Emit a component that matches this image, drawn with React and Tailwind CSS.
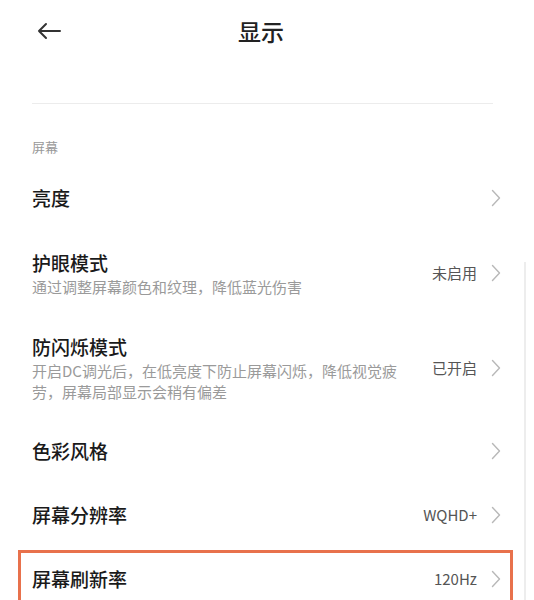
import React from 'react';

const Chevron = () => (
    <svg width="10" height="18" viewBox="0 0 10 18" fill="none" className="shrink-0">
        <path d="M1.5 1.5 L8.5 9 L1.5 16.5" stroke="#b8b8b8" strokeWidth="1.4" strokeLinecap="round" strokeLinejoin="round" />
    </svg>
);

const Row = ({ title, sub, value, height }) => (
    <div className={`flex items-center justify-between pl-[32px] pr-[33px] ${height}`}>
        <div className="flex flex-col">
            <div className="text-[19px] leading-[26px] font-medium text-[#1a1a1a]">{title}</div>
            {sub && (
                <div className="text-[15px] leading-[21px] text-[#9a9a9a] max-w-[382px]">{sub}</div>
            )}
        </div>
        <div className="flex items-center gap-[14px] shrink-0">
            {value && <span className="text-[15px] text-[#555]">{value}</span>}
            <Chevron />
        </div>
    </div>
);

export default function App() {
    return (
        <div
            className="relative w-[534px] h-[600px] overflow-hidden bg-white"
            style={{ fontFamily: '"Noto Sans CJK SC", "Noto Sans", sans-serif' }}
        >
            {/* header */}
            <div className="relative flex items-center justify-center h-[62px] pr-[12px]">
                <svg width="26" height="18" viewBox="0 0 26 18" fill="none" className="absolute left-[36px] top-[22px]">
                    <path d="M24 9 H3 M10 2 L3 9 L10 16" stroke="#333" strokeWidth="2" strokeLinecap="round" strokeLinejoin="round" />
                </svg>
                <h1 className="text-[23px] font-medium text-[#222]">显示</h1>
            </div>

            <div className="h-[41px]" />
            <div className="ml-[32px] mr-[41px] h-px bg-[#ececec]" />

            <div className="pl-[32px] pt-[34px] mb-[10px] text-[13px] leading-[18px] text-[#999]">屏幕</div>

            <Row title="亮度" height="h-[64px]" />
            <Row title="护眼模式" sub="通过调整屏幕颜色和纹理，降低蓝光伤害" value="未启用" height="h-[86px]" />
            <Row
                title="防闪烁模式"
                sub="开启DC调光后，在低亮度下防止屏幕闪烁，降低视觉疲劳，屏幕局部显示会稍有偏差"
                value="已开启"
                height="h-[104px]"
            />
            <Row title="色彩风格" height="h-[62px]" />
            <Row title="屏幕分辨率" value="WQHD+" height="h-[66px]" />

            <div className="mt-[2px] mx-[18px] mr-[21px] border-[3px] border-[#e8714c] h-[62px] flex items-start justify-between pl-[11px] pr-[9px] pt-[13px]">
                <div className="text-[19px] leading-[26px] font-medium text-[#1a1a1a]">屏幕刷新率</div>
                <div className="flex items-center gap-[14px] h-[26px]">
                    <span className="text-[15px] text-[#555]">120Hz</span>
                    <Chevron />
                </div>
            </div>

            {/* scrollbar */}
            <div className="absolute right-[8px] top-[262px] w-[2px] h-[340px] bg-[#ededed]" />
        </div>
    );
}
